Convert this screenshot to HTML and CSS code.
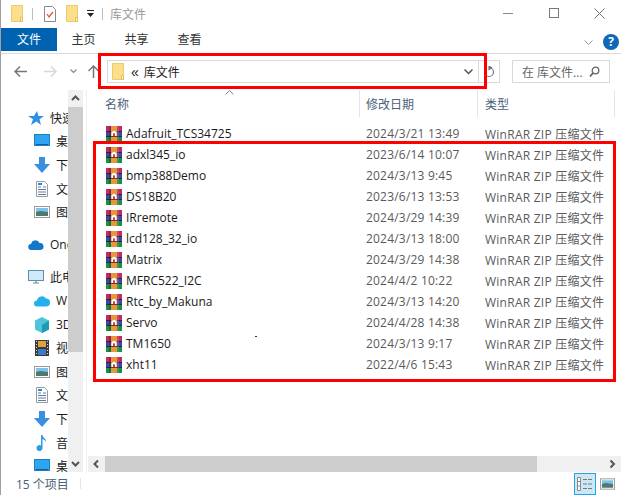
FILE: index.html
```html
<!DOCTYPE html>
<html lang="zh-CN">
<head>
    <meta charset="UTF-8">
    <title>库文件</title>
    <link rel="stylesheet" href="styles.css">
</head>
<body>
    <svg class="defs" width="0" height="0">
        <symbol id="folder" viewBox="0 0 12 17">
            <path d="M.5 .5h11v16H.5z" fill="#fcdf8c" stroke="#eccb6a"/>
            <path d="M9.500 12.500h2v4h-2z" fill="#fff6d6" stroke="#e3bd55"/>
        </symbol>
        <symbol id="rar" viewBox="0 0 16 16">
            <rect width="16" height="16" fill="#26264a"/>
            <rect x="0" y="0" width="16" height="5" fill="#c42a5e"/>
            <rect x="0" y="6" width="16" height="4" fill="#4444a8"/>
            <rect x="0" y="11" width="16" height="5" fill="#1c8f42"/>
            <rect x="3" y="0" width="2" height="16" fill="#000" fill-opacity=".2"/>
            <rect x="11" y="0" width="2" height="16" fill="#fff" fill-opacity=".12"/>
            <rect x="5" y="0" width="6" height="16" fill="#e8963a"/>
            <path d="M5.500 10V6.500q2.500-3.500 5 0V10H9V7.500H7V10z" fill="#fff"/>
            <rect x="7" y="7.500" width="2" height="2.500" fill="#d0452c"/>
            <rect x="5" y="10" width="6" height="1" fill="#7a3418"/>
        </symbol>
        <symbol id="monitor" viewBox="0 0 16 14">
            <rect x=".5" y=".5" width="15" height="11" fill="#2ea5f2" stroke="#1e7fc4"/>
            <path d="M2 10.500h12" stroke="#0d5f9c"/>
        </symbol>
        <symbol id="down" viewBox="0 0 16 16">
            <path d="M5 0h6v7h5l-8 9-8-9h5z" fill="#3a8fe0"/>
        </symbol>
        <symbol id="doc" viewBox="0 0 12 16">
            <path d="M.5 .5h8l3 3v12H.5z" fill="#fff" stroke="#9a9a9a"/>
            <path d="M2 6h3M7 6h3M2 8.500h8M2 11h8M2 13.500h8" stroke="#5a7ca0"/>
            <path d="M2 3h4" stroke="#2f8ad0" stroke-width="2"/>
        </symbol>
        <symbol id="pic" viewBox="0 0 16 12">
            <rect x=".5" y=".5" width="15" height="11" fill="#fff" stroke="#9a9a9a"/>
            <rect x="2" y="2" width="12" height="4" fill="#7fc0ee"/>
            <path d="M2 6l4-1 8 1v4H2z" fill="#4e7a6c"/>
        </symbol>
    </svg>

    <div class="window">
        <div class="titlebar">
            <svg class="qa-folder"><use href="#folder"/></svg>
            <span class="qa-sep"></span>
            <svg class="qa-check" viewBox="0 0 12 16">
                <path d="M.5 .5h8l3 3v12H.5z" fill="#fff" stroke="#8a8a8a"/>
                <path d="M3 8l2 3 4-5" fill="none" stroke="#e0582a" stroke-width="1.300"/>
            </svg>
            <svg class="qa-folder2"><use href="#folder"/></svg>
            <svg class="qa-drop" viewBox="0 0 7 8">
                <path d="M0 .5h7" stroke="#222"/>
                <path d="M0 3h7L3.500 7z" fill="#222"/>
            </svg>
            <span class="qa-sep qa-sep2"></span>
            <span class="title">库文件</span>
            <div class="winbtns">
                <svg width="11" height="11"><path d="M0 5.500h10" stroke="#888"/></svg>
                <svg width="11" height="11"><rect x=".5" y=".5" width="9" height="9" fill="none" stroke="#777"/></svg>
                <svg width="11" height="11"><path d="M.5 .5l10 10M10.500 .5l-10 10" stroke="#777"/></svg>
            </div>
        </div>

        <div class="ribbon">
            <span class="tab tab-file">文件</span>
            <span class="tab">主页</span>
            <span class="tab">共享</span>
            <span class="tab">查看</span>
            <svg class="ribbon-chevron" width="9" height="6"><path d="M.5 .5l4 4 4-4" fill="none" stroke="#999"/></svg>
            <span class="help">?</span>
        </div>

        <div class="addrbar">
            <svg class="nav-back" width="13" height="11" viewBox="0 0 13 11"><path d="M6 .5l-5 5 5 5M1 5.500h12" fill="none" stroke="#777" stroke-width="1.500"/></svg>
            <svg class="nav-fwd" width="13" height="11" viewBox="0 0 13 11"><path d="M7 .5l5 5-5 5M12 5.500H0" fill="none" stroke="#d8d8d8" stroke-width="1.500"/></svg>
            <svg class="nav-hist" width="7" height="5" viewBox="0 0 7 5"><path d="M.5 .5l3 3 3-3" fill="none" stroke="#888" stroke-width="1.200"/></svg>
            <svg class="nav-up" width="11" height="13" viewBox="0 0 11 13"><path d="M.5 6l5-5 5 5M5.500 1v12" fill="none" stroke="#777" stroke-width="1.500"/></svg>
            <div class="addrbox">
                <svg class="addr-folder"><use href="#folder"/></svg>
                <span class="crumb-more">&laquo;</span>
                <span class="crumb">库文件</span>
                <svg class="addr-drop" width="9" height="6" viewBox="0 0 9 6"><path d="M.5 .5l4 4 4-4" fill="none" stroke="#555" stroke-width="1.500"/></svg>
            </div>
            <div class="refresh">
                <svg width="12" height="12" viewBox="0 0 12 12"><path d="M6 1.500a4.500 4.500 0 1 1-4.500 4.500M6 0v3.500l2.500-1.700z" fill="none" stroke="#777" stroke-width="1.200"/></svg>
            </div>
            <div class="searchbox">
                <span>在 库文件...</span>
                <svg width="11" height="11" viewBox="0 0 11 11"><circle cx="6.500" cy="4.500" r="3.300" fill="none" stroke="#666" stroke-width="1.300"/><path d="M4 7l-3 3.500" stroke="#666" stroke-width="1.800"/></svg>
            </div>
        </div>

        <div class="main">
            <div class="nav">
                <div class="nav-list">
                    <div class="nav-item nav-top"><svg class="ic16" viewBox="0 0 16 16"><path d="M9 1l1.500 5H16l-4.500 3.300L13 15l-4.500-3.500L3 15l2-5.700L0 6h6z" fill="#2f8fe6"/></svg><span>快速</span></div>
                    <div class="nav-item nav-sub"><svg class="ic16"><use href="#monitor"/></svg><span>桌</span></div>
                    <div class="nav-item nav-sub"><svg class="ic16"><use href="#down"/></svg><span>下</span></div>
                    <div class="nav-item nav-sub"><svg class="ic16"><use href="#doc"/></svg><span>文</span></div>
                    <div class="nav-item nav-sub"><svg class="ic16"><use href="#pic"/></svg><span>图</span></div>
                    <div class="nav-item nav-top nav-group"><svg class="ic16" viewBox="0 0 16 11"><path d="M3.500 10.500a3 3 0 0 1-.5-6 4.500 4.500 0 0 1 8.500-1 3.500 3.500 0 0 1 1 7z" fill="#1476c8"/></svg><span>One</span></div>
                    <div class="nav-item nav-top nav-group"><svg class="ic16" viewBox="0 0 16 14"><rect x=".5" y=".5" width="15" height="10" fill="#cfeafa" stroke="#5f8fa8"/><path d="M5 13h6M8 11v2" stroke="#5f8fa8" stroke-width="1.200"/></svg><span>此电</span></div>
                    <div class="nav-item nav-sub"><svg class="ic16" viewBox="0 0 16 12"><path d="M3 11.500a3 3 0 0 1 0-6 5 5 0 0 1 9-2 4 4 0 0 1 0 8z" fill="#22b0ee"/></svg><span>W</span></div>
                    <div class="nav-item nav-sub"><svg class="ic16" viewBox="0 0 16 16"><path d="M8 0l7 3.500v9L8 16l-7-3.500v-9z" fill="#4fc4d8"/><path d="M8 8l7-4.500v9L8 16z" fill="#1f9ab4"/></svg><span>3D</span></div>
                    <div class="nav-item nav-sub"><svg class="ic16" viewBox="0 0 14 16"><rect width="14" height="16" fill="#3a3a3a"/><path d="M1 1.500h1M1 4.500h1M1 7.500h1M1 10.500h1M1 13.500h1M12 1.500h1M12 4.500h1M12 7.500h1M12 10.500h1M12 13.500h1" stroke="#ddd"/><rect x="3" y="1" width="8" height="6" fill="#e0a13c"/><rect x="3" y="9" width="8" height="6" fill="#3a7ac8"/></svg><span>视</span></div>
                    <div class="nav-item nav-sub"><svg class="ic16"><use href="#pic"/></svg><span>图</span></div>
                    <div class="nav-item nav-sub"><svg class="ic16"><use href="#doc"/></svg><span>文</span></div>
                    <div class="nav-item nav-sub"><svg class="ic16"><use href="#down"/></svg><span>下</span></div>
                    <div class="nav-item nav-sub"><svg class="ic16" viewBox="0 0 12 16"><path d="M5 0h1.500c.3 3 4 3.500 3.500 7-.7-1.800-2-2.500-3.500-2.700V13a3 3 0 1 1-1.500-2.500z" fill="#2a9be8"/></svg><span>音</span></div>
                    <div class="nav-item nav-sub"><svg class="ic16"><use href="#monitor"/></svg><span>桌</span></div>
                </div>
            </div>
            <div class="vscroll">
                <svg class="vs-btn" width="15" height="17" viewBox="0 0 15 17"><path d="M4 10l3.500-3.500L11 10" fill="none" stroke="#555" stroke-width="2"/></svg>
                <div class="vs-track"><div class="vs-thumb"></div></div>
                <svg class="vs-btn" width="15" height="17" viewBox="0 0 15 17"><path d="M4 7l3.500 3.500L11 7" fill="none" stroke="#555" stroke-width="2"/></svg>
            </div>

            <div class="content">
                <div class="columns">
                    <svg class="sort-arrow" width="9" height="5" viewBox="0 0 9 5"><path d="M.5 4.500l4-4 4 4" fill="none" stroke="#888"/></svg>
                    <div class="col col-name">名称</div>
                    <div class="col col-date">修改日期</div>
                    <div class="col col-type">类型</div>
                </div>
                <div class="files">
                    <div class="file"><svg class="ic-rar"><use href="#rar"/></svg><span class="f-name">Adafruit_TCS34725</span><span class="f-date">2024/3/21 13:49</span><span class="f-type">WinRAR ZIP 压缩文件</span></div>
                    <div class="file"><svg class="ic-rar"><use href="#rar"/></svg><span class="f-name">adxl345_io</span><span class="f-date">2023/6/14 10:07</span><span class="f-type">WinRAR ZIP 压缩文件</span></div>
                    <div class="file"><svg class="ic-rar"><use href="#rar"/></svg><span class="f-name">bmp388Demo</span><span class="f-date">2024/3/13 9:45</span><span class="f-type">WinRAR ZIP 压缩文件</span></div>
                    <div class="file"><svg class="ic-rar"><use href="#rar"/></svg><span class="f-name">DS18B20</span><span class="f-date">2023/6/13 13:53</span><span class="f-type">WinRAR ZIP 压缩文件</span></div>
                    <div class="file"><svg class="ic-rar"><use href="#rar"/></svg><span class="f-name">IRremote</span><span class="f-date">2024/3/29 14:39</span><span class="f-type">WinRAR ZIP 压缩文件</span></div>
                    <div class="file"><svg class="ic-rar"><use href="#rar"/></svg><span class="f-name">lcd128_32_io</span><span class="f-date">2024/3/13 18:00</span><span class="f-type">WinRAR ZIP 压缩文件</span></div>
                    <div class="file"><svg class="ic-rar"><use href="#rar"/></svg><span class="f-name">Matrix</span><span class="f-date">2024/3/29 14:38</span><span class="f-type">WinRAR ZIP 压缩文件</span></div>
                    <div class="file"><svg class="ic-rar"><use href="#rar"/></svg><span class="f-name">MFRC522_I2C</span><span class="f-date">2024/4/2 10:22</span><span class="f-type">WinRAR ZIP 压缩文件</span></div>
                    <div class="file"><svg class="ic-rar"><use href="#rar"/></svg><span class="f-name">Rtc_by_Makuna</span><span class="f-date">2024/3/13 14:20</span><span class="f-type">WinRAR ZIP 压缩文件</span></div>
                    <div class="file"><svg class="ic-rar"><use href="#rar"/></svg><span class="f-name">Servo</span><span class="f-date">2024/4/28 14:38</span><span class="f-type">WinRAR ZIP 压缩文件</span></div>
                    <div class="file"><svg class="ic-rar"><use href="#rar"/></svg><span class="f-name">TM1650</span><span class="f-date">2024/3/13 9:17</span><span class="f-type">WinRAR ZIP 压缩文件</span></div>
                    <div class="file"><svg class="ic-rar"><use href="#rar"/></svg><span class="f-name">xht11</span><span class="f-date">2022/4/6 15:43</span><span class="f-type">WinRAR ZIP 压缩文件</span></div>
                </div>
                <div class="hscroll">
                    <svg class="hs-btn" width="17" height="16" viewBox="0 0 17 16"><path d="M10 4.500L6.500 8l3.500 3.500" fill="none" stroke="#555" stroke-width="2"/></svg>
                    <div class="hs-thumb"></div>
                    <div class="hs-rest"></div>
                    <svg class="hs-btn" width="17" height="16" viewBox="0 0 17 16"><path d="M6.500 4.500L10 8l-3.500 3.500" fill="none" stroke="#555" stroke-width="2"/></svg>
                </div>
            </div>
        </div>

        <div class="status">
            <span class="count">15 个项目</span>
            <span class="status-sep"></span>
            <div class="view-btn view-on">
                <svg width="16" height="14" viewBox="0 0 16 14"><path d="M.5 .5h3v13h-3zM.5 4.500h3M.5 9h3" fill="#fff" stroke="#888"/><path d="M6 2.500h4M11 2.500h4M6 7h4M11 7h4M6 11.500h4M11 11.500h4" stroke="#777"/></svg>
            </div>
            <div class="view-btn">
                <svg width="15" height="12"><use href="#pic"/></svg>
            </div>
        </div>

        <div class="mark mark-addr"></div>
        <div class="mark mark-files"></div>
        <span class="speck"></span>
    </div>
</body>
</html>
```

FILE: styles.css
```css
* {
    box-sizing: border-box;
}
html, body {
    margin: 0;
    height: 100%;
    overflow: hidden;
    background: white;
}
.defs {
    position: absolute;
}
.window {
    position: relative;
    width: 621px;
    height: 495px;
    border-left: 1px solid #a0a0a0;
    display: flex;
    flex-direction: column;
    font-family: "Open Sans", "Noto Sans CJK SC", sans-serif;
    font-size: 12px;
    color: #1a1a1a;
}

/* title bar */
.titlebar {
    height: 27px;
    display: flex;
    align-items: center;
}
.qa-folder {
    width: 12px;
    height: 17px;
    margin-left: 10px;
}
.qa-sep {
    width: 1px;
    height: 12px;
    background: #bdbdbd;
    margin-left: 9px;
}
.qa-check {
    width: 12px;
    height: 16px;
    margin-left: 11px;
}
.qa-folder2 {
    width: 12px;
    height: 17px;
    margin-left: 10px;
}
.qa-drop {
    width: 7px;
    height: 8px;
    margin-left: 9px;
}
.qa-sep2 {
    margin-left: 8px;
}
.title {
    margin-left: 7px;
    color: #999;
}
.winbtns {
    margin-left: auto;
    width: 118px;
    display: flex;
    gap: 34.500px;
}

/* ribbon */
.ribbon {
    height: 27px;
    display: flex;
    align-items: flex-start;
    padding-top: 1px;
    border-bottom: 1px solid #dadada;
}
.tab {
    width: 53px;
    height: 23px;
    line-height: 23px;
    text-align: center;
    color: #333;
}
.tab-file {
    width: 56px;
    background: #0063b1;
    color: white;
}
.ribbon-chevron {
    margin-left: auto;
    margin-top: 12px;
}
.help {
    width: 16px;
    height: 16px;
    margin: 6px 2px 0 10px;
    border-radius: 50%;
    background: #1167b8;
    color: white;
    font-weight: bold;
    line-height: 16px;
    text-align: center;
}

/* address row */
.addrbar {
    height: 36px;
    display: flex;
    align-items: center;
    padding-bottom: 1px;
}
.nav-back {
    margin-left: 13px;
}
.nav-fwd {
    margin-left: 17px;
}
.nav-hist {
    margin-left: 13px;
}
.nav-up {
    margin-left: 11px;
}
.addrbox {
    width: 372px;
    height: 23px;
    margin-left: 8px;
    border: 1px solid #d9d9d9;
    display: flex;
    align-items: center;
    padding-left: 4px;
}
.addr-folder {
    width: 12px;
    height: 17px;
}
.crumb-more {
    margin-left: 7px;
    font-family: "Liberation Sans", sans-serif;
    font-size: 14px;
}
.crumb {
    margin-left: 5px;
}
.addr-drop {
    margin-left: auto;
    margin-right: 5px;
}
.refresh {
    width: 21px;
    height: 23px;
    border: 1px solid #d9d9d9;
    border-left: 0;
    display: flex;
    align-items: center;
    justify-content: center;
}
.searchbox {
    width: 98px;
    height: 23px;
    margin-left: 12px;
    border: 1px solid #d9d9d9;
    display: flex;
    align-items: center;
    justify-content: space-between;
    padding: 0 9px;
    color: #666;
}

/* navigation pane */
.main {
    flex: 1;
    min-height: 0;
    display: flex;
}
.nav {
    width: 67px;
    overflow: hidden;
}
.nav-list {
    padding-top: 16px;
}
.nav-item {
    height: 23.600px;
    display: flex;
    align-items: center;
    white-space: nowrap;
}
.nav-item svg {
    flex: none;
}
.nav-item span {
    margin-left: 6px;
}
.nav-top {
    padding-left: 27px;
}
.nav-sub {
    padding-left: 33px;
}
.nav-group {
    margin-top: 9px;
}
.ic16 {
    width: 16px;
    height: 16px;
}
.vscroll {
    width: 15px;
    display: flex;
    flex-direction: column;
    background: #f0f0f0;
}
.vs-track {
    flex: 1;
}
.vs-thumb {
    height: 245px;
    background: #cdcdcd;
}

/* file list */
.content {
    flex: 1;
    min-width: 0;
    margin-left: 3px;
    border-left: 1px solid #f0f0f0;
    padding-left: 1px;
    display: flex;
    flex-direction: column;
    position: relative;
}
.columns {
    height: 28px;
    display: flex;
    color: #4c607a;
    position: relative;
}
.sort-arrow {
    position: absolute;
    left: 137px;
    top: 0;
}
.col {
    padding-top: 5px;
    height: 27px;
    border-right: 1px solid #e5e5e5;
}
.col-name {
    width: 272px;
    padding-left: 17px;
}
.col-date {
    width: 118px;
    padding-left: 6px;
}
.col-type {
    width: 137px;
    padding-left: 7px;
}
.files {
    flex: 1;
    padding-top: 5px;
}
.file {
    height: 21px;
    display: flex;
    align-items: center;
    padding-left: 18px;
}
.ic-rar {
    width: 16px;
    height: 16px;
    flex: none;
}
.f-name {
    width: 238px;
    padding-left: 4px;
}
.f-date {
    width: 118px;
    padding-left: 6px;
    color: #5a5a5a;
    letter-spacing: 0.2px;
}
.f-type {
    padding-left: 7px;
    color: #5a5a5a;
    white-space: nowrap;
    letter-spacing: 0.25px;
}
.hscroll {
    height: 16px;
    display: flex;
    background: #f0f0f0;
}
.hs-thumb {
    width: 432px;
    background: #cdcdcd;
}
.hs-rest {
    flex: 1;
}

/* status bar */
.status {
    height: 23px;
    display: flex;
    align-items: center;
    color: #4c607a;
}
.count {
    margin-left: 15px;
}
.status-sep {
    width: 1px;
    height: 11px;
    background: #e5e5e5;
    margin-left: 11px;
    margin-right: auto;
}
.view-btn {
    width: 22px;
    height: 22px;
    display: flex;
    align-items: center;
    justify-content: center;
}
.view-on {
    background: #cce8f6;
    border: 1px solid #27a3e0;
}
.status .view-btn:last-child {
    margin-right: 3px;
}

/* red annotation boxes drawn over the window */
.mark {
    position: absolute;
    border: 3px solid #f00;
}
.mark-addr {
    left: 97px;
    top: 53px;
    width: 389px;
    height: 36px;
}
.mark-files {
    left: 92px;
    top: 141px;
    width: 523px;
    height: 241px;
}
.speck {
    position: absolute;
    left: 254px;
    top: 336px;
    width: 2px;
    height: 1px;
    background: #333;
}
```
